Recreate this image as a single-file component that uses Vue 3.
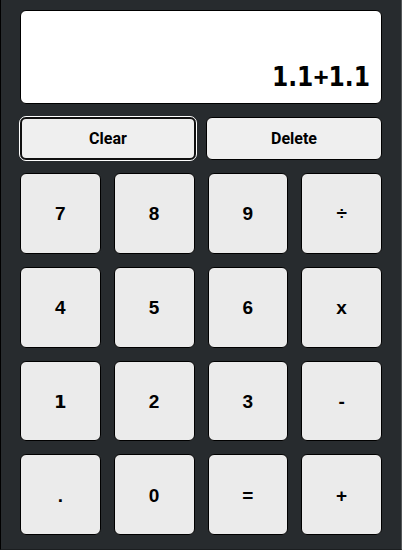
<script setup>
import { computed, ref } from 'vue'

const expression = ref('1.1+1.1')
const keys = ['7', '8', '9', '÷', '4', '5', '6', 'x', '1', '2', '3', '-', '.', '0', '=', '+']
const parts = computed(() => expression.value.match(/[\d.]+|[^\d.]+/g) || [])

function calculate(source) {
  const tokens = source.match(/\d*\.?\d+|[÷x+-]/g) || []
  const terms = [Number(tokens[0])]
  for (let i = 1; i < tokens.length; i += 2) {
    const value = Number(tokens[i + 1])
    if (tokens[i] === 'x') terms.push(terms.pop() * value)
    else if (tokens[i] === '÷') terms.push(terms.pop() / value)
    else terms.push(tokens[i] === '-' ? -value : value)
  }
  const total = terms.reduce((sum, term) => sum + term, 0)
  return String(Number(total.toFixed(10)))
}

function press(key) {
  if (key !== '=') expression.value += key
  else if (expression.value) expression.value = calculate(expression.value)
}
</script>

<template>
  <main class="calculator">
    <output class="display">
      <span v-for="(part, index) in parts" :key="index" :class="{ number: /\d|\./.test(part) }">{{ part }}</span>
    </output>
    <div class="actions">
      <button class="action selected" type="button" @click="expression = ''">Clear</button>
      <button class="action" type="button" @click="expression = expression.slice(0, -1)">Delete</button>
    </div>
    <div class="keypad">
      <button
        v-for="key in keys"
        :key="key"
        class="key"
        :class="{ one: key === '1' }"
        type="button"
        @click="press(key)"
      >{{ key }}</button>
    </div>
  </main>
</template>

<style>
body {
  background: #272b2e;
}
</style>

<style scoped>
.calculator {
  box-sizing: border-box;
  min-height: 100vh;
  display: flex;
  flex-direction: column;
  gap: 13px;
  padding: 10px 19px 14px;
  border: solid #000;
  border-width: 0 1px 1px;
  border-right-color: #55585a;
  border-bottom-color: #1b1e20;
  background: #272b2e;
  font-family: "Liberation Sans", Arial, sans-serif;
  font-weight: 700;
  color: #000;
}

.display {
  box-sizing: border-box;
  min-height: 94px;
  display: flex;
  align-items: last baseline;
  justify-content: flex-end;
  padding: 11px;
  border: 1px solid #000;
  border-radius: 6px;
  background: #fff;
  font-size: 26px;
  line-height: 30px;
}

.number {
  font-family: "DejaVu Sans Condensed", "DejaVu Sans", sans-serif;
}

.actions {
  display: grid;
  grid-template-columns: 1fr 1fr;
  gap: 10px;
}

.action,
.key {
  box-sizing: border-box;
  margin: 0;
  padding: 0;
  border: 1px solid #000;
  border-radius: 6px;
  color: #000;
  font: inherit;
  cursor: pointer;
}

.action {
  height: 43px;
  background: #efefef;
  font-family: Roboto, "Liberation Sans", sans-serif;
  font-size: 16px;
}

.selected {
  border: 2px solid #101010;
  outline: 1px solid #fff;
}

.keypad {
  display: grid;
  grid-template-columns: repeat(4, 1fr);
  gap: 13px;
}

.key {
  aspect-ratio: 1;
  padding-top: 2px;
  background: #ebebeb;
  font-size: 19px;
}

.one {
  font-family: "DejaVu Sans", sans-serif;
  font-size: 18px;
}
</style>
